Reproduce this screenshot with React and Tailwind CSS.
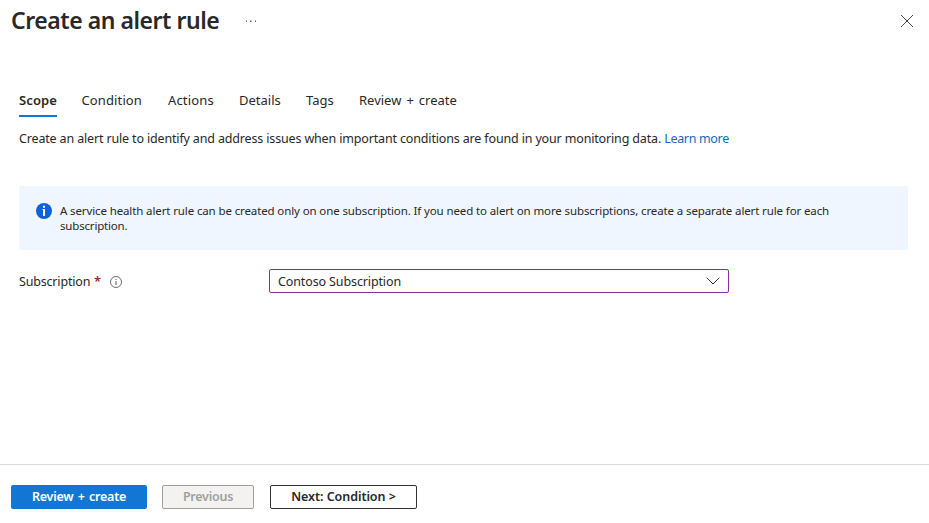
import React from 'react';

const tabs = [
  { label: 'Condition', cls: 'w-[86.5px] tracking-[0.12px]' },
  { label: 'Actions', cls: 'w-[71px] tracking-[0.16px]' },
  { label: 'Details', cls: 'w-[67px]' },
  { label: 'Tags', cls: 'w-[53px]' },
  { label: 'Review + create', cls: '[word-spacing:1.6px]' },
];

export default function App() {
  return (
    <div className="flex h-[523px] w-[929px] flex-col overflow-hidden bg-white font-['Noto_Sans','Open_Sans',sans-serif] text-[12.5px] text-[#292827]">
      <header className="flex h-[42px] items-center pl-[11px] pr-4">
        <h1 className="w-[235px] whitespace-nowrap pb-[2px] text-[23px] font-semibold leading-[40px] tracking-[-0.45px]">Create an alert rule</h1>
        <svg className="h-[11px] w-[11px]" viewBox="0 0 11 11" fill="#605e5c">
          <path d="M0 4.5h1V6H0zM4 4.5h1.4V6H4zM9 4.5h1V6H9z" />
        </svg>
        <svg className="ml-auto h-3 w-3" viewBox="0 0 12 12" stroke="#4a4948" strokeWidth="1" fill="none">
          <path d="M0 0l12 12M12 0L0 12" />
        </svg>
      </header>
      <main className="flex-1 pl-[19px] pr-[21px] pt-[44px]">
        <nav className="flex h-[31px] whitespace-nowrap text-[13px] leading-[28px]">
          <div className="mr-[24.5px] w-[38px] border-b-2 border-[#1277d4] font-semibold tracking-[0.12px]">Scope</div>
          {tabs.map((t) => <div key={t.label} className={t.cls}>{t.label}</div>)}
        </nav>
        <p className="mt-[12px] whitespace-nowrap leading-5 tracking-[-0.155px]">
          Create an alert rule to identify and address issues when important conditions are found in your monitoring data. <a className="tracking-[-0.33px] text-[#0f6cbd]">Learn more</a>
        </p>
        <div className="mt-[37px] flex h-16 rounded-[2px] bg-[#eff6ff] pl-[17px] pt-[17px]">
          <svg className="h-4 w-4" viewBox="0 0 16 16">
            <circle cx="8" cy="8" r="8" fill="#1160dc" />
            <path fill="#fff" d="M7 2.7h2v2H7zM6.5 6H9v7H7V7h-.5z" />
          </svg>
          <p className="ml-2 whitespace-nowrap text-[11.5px] leading-[15px] tracking-[-0.12px]">
            A service health alert rule can be created only on one subscription. If you need to alert on more subscriptions, create a separate alert rule for each<br /><span className="tracking-[-0.18px]">subscription.</span>
          </p>
        </div>
        <div className="mt-[19px] flex h-6 items-center">
          <span className="w-[75px] pt-[2px] tracking-[-0.18px]">Subscription</span>
          <span className="w-[16px] pt-px text-[13px] font-semibold text-[#a4262c]">*</span>
          <svg className="mt-[2px] h-3 w-3" viewBox="0 0 12 12" fill="none" stroke="#605e5c">
            <circle cx="6" cy="6" r="5.5" strokeWidth=".9" />
            <path d="M6 5v4M6 3v1" strokeWidth="1" />
          </svg>
          <div className="ml-[147px] flex h-6 w-[460px] items-center justify-between rounded-[2px] border border-[#8a2da5] px-2 tracking-[-0.12px]">
            <span className="pt-[2px]">Contoso Subscription</span>
            <svg className="h-[8px] w-[14px]" viewBox="0 0 14 8" fill="none" stroke="#323130"><path d="M.7.7L7 7L13.3.7" /></svg>
          </div>
        </div>
      </main>
      <footer className="flex h-[59px] whitespace-nowrap border-t border-[#dcdcdc] pl-[11px] pt-[20px] font-semibold">
        <button className="mr-[15px] h-6 w-[136px] rounded-[2px] bg-[#1277d4] tracking-[-0.25px] text-white [word-spacing:1.4px]">Review + create</button>
        <button className="mr-[16px] h-6 w-[92px] rounded-[2px] border border-[#a19f9d] bg-[#f3f2f1] tracking-[-0.25px] text-[#a19f9d]">Previous</button>
        <button className="h-6 w-[147px] rounded-[2px] border border-[#323130] tracking-[-0.06px]">Next: Condition &gt;</button>
      </footer>
    </div>
  );
}
